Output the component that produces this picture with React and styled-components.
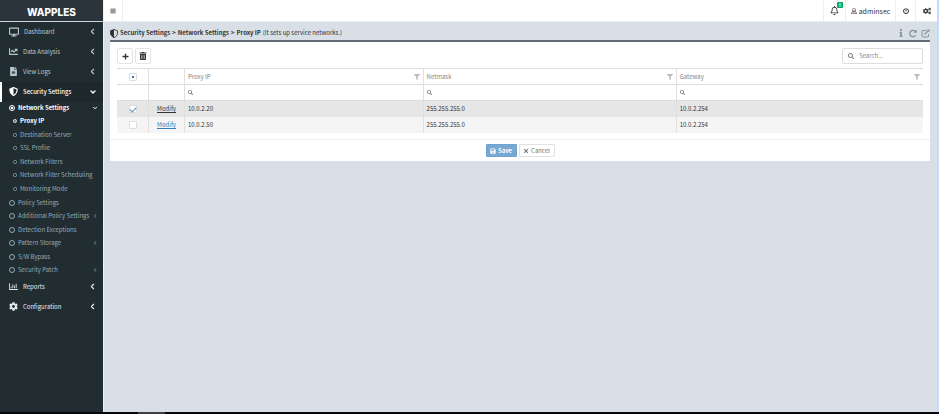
import React from "react";
import styled, { createGlobalStyle, css } from "styled-components";
import {
  FaBars, FaChartLine, FaCog, FaCogs, FaDesktop, FaFileAlt,
  FaFilter, FaInfo, FaPlus, FaPowerOff, FaRegBell, FaRegChartBar,
  FaRegUser, FaSave, FaSearch, FaShieldAlt, FaTimes, FaTrashAlt,
} from "react-icons/fa";
import { FiChevronDown, FiChevronLeft } from "react-icons/fi";

const GlobalStyle = createGlobalStyle`
  * { box-sizing: border-box; }
  body {
    margin: 0;
    background: #d9dfe7;
    color: #333;
    font: 6px/10px "Noto Sans CJK KR", "Noto Sans", sans-serif;
  }
  button, input { font: inherit; color: inherit; }
  ul { margin: 0; padding: 0; list-style: none; }
  a { color: inherit; text-decoration: none; }
  svg { flex: none; display: block; }
`;

const Page = styled.div`
  display: grid;
  grid-template-columns: 104px 1fr 2px;
  grid-template-rows: 1fr 2px;
  min-height: 100vh;
`;
const Sidebar = styled.aside`
  background: #222d32;
  color: #b8c7ce;
  border-right: 1px solid #eef1f4;
`;
const Brand = styled.a`
  display: flex;
  align-items: center;
  justify-content: center;
  height: 22px;
  padding-top: 3px;
  background: #2b343b;
  border-bottom: 1px solid #cfd5d9;
  color: #fff;
  font: 800 10px/12px Inter, sans-serif;
`;
const MainItem = styled.a`
  display: flex;
  align-items: center;
  gap: 5px;
  height: 20px;
  padding: 0 6px 1px ${(p) => (p.$active ? 7 : 9)}px;
  color: ${(p) => (p.$bright ? "#e4eaed" : "#b8c7ce")};
  ${(p) => p.$active && css`
    background: #1e282c;
    border-left: 2px solid #fff;
    color: #fff;
    font-weight: 500;
  `}
`;
const Label = styled.span`
  flex: 1;
  white-space: nowrap;
`;
const SubMenu = styled.ul`
  display: grid;
  grid-template-rows: repeat(13, 1fr);
  height: 176px;
  margin-top: -1px;
  color: #93acb7;
`;
const SubGroup = styled.li`
  display: grid;
  grid-row: span ${(p) => p.$rows};
  grid-template-rows: repeat(${(p) => p.$rows}, 1fr);
`;
const Nested = styled.ul`
  display: grid;
  grid-row: span 6;
  grid-template-rows: repeat(6, 1fr);
`;
const SubLink = styled.a`
  display: flex;
  align-items: center;
  gap: 3px;
  height: 100%;
  padding: 0 5px 0 ${(p) => (p.$deep ? 13 : 9)}px;
  ${(p) => p.$active && css`
    color: #fff;
    font-weight: 700;
  `}
`;
const Main = styled.main`
  display: flex;
  flex-direction: column;
`;
const TopBar = styled.header`
  display: flex;
  height: 22px;
  background: #fff;
  border-bottom: 1px solid #e8ebef;
`;
const TopButton = styled.button`
  display: flex;
  align-items: center;
  justify-content: center;
  gap: 2px;
  width: ${(p) => p.$width}px;
  padding: 0;
  background: none;
  border: 0 solid #eeeff1;
  border-${(p) => p.$side || "left"}-width: 1px;
  font-size: 7px;
`;
const Spacer = styled.div`
  flex: 1;
`;
const BellWrap = styled.span`
  position: relative;
`;
const Badge = styled.span`
  position: absolute;
  top: -4px;
  right: -4px;
  width: 6px;
  height: 6px;
  background: #00a65a;
  border-radius: 1px;
  color: #fff;
  font-size: 5px;
  line-height: 6px;
  text-align: center;
`;
const Content = styled.div`
  padding: 0 7px 0 6px;
`;
const TitleRow = styled.div`
  display: flex;
  align-items: center;
  gap: 2px;
  height: 18px;
  padding-top: 4px;
`;
const Crumbs = styled.nav`
  display: flex;
  align-items: center;
  gap: 2px;
  font-weight: 700;
`;
const Note = styled.span`
  font-weight: 400;
`;
const PageActions = styled.div`
  display: flex;
  align-items: center;
  gap: 4px;
  margin-left: auto;
  color: #8593a3;
`;
const IconButton = styled.button`
  display: flex;
  padding: 0;
  background: none;
  border: 0;
`;
const Panel = styled.section`
  background: #fff;
  border-top: 2px solid #636c76;
  border-radius: 1px;
`;
const Toolbar = styled.div`
  display: flex;
  align-items: center;
  gap: 2px;
  padding: 6px 7px 4px;
`;
const ToolButton = styled.button`
  display: flex;
  align-items: center;
  justify-content: center;
  width: 16px;
  height: 16px;
  padding: 0;
  background: #fff;
  border: 1px solid #e4e4e4;
  border-radius: 2px;
`;
const SearchBox = styled.label`
  display: flex;
  align-items: center;
  gap: 5px;
  width: 81px;
  height: 16px;
  margin-left: auto;
  padding: 0 5px;
  border: 1px solid #ddd;
  border-radius: 2px;
  color: #777;
`;
const TextField = styled.input`
  flex: 1;
  min-width: 0;
  width: 100%;
  height: 10px;
  padding: 0;
  background: none;
  border: 0;
  outline: 0;
  &::placeholder { color: #888; opacity: 1; }
`;
const TableWrap = styled.div`
  padding: 0 7px 6px;
  border-bottom: 1px solid #eee;
`;
const Table = styled.table`
  width: 100%;
  table-layout: fixed;
  border-collapse: separate;
  border-spacing: 0;
`;
const Col = styled.col`
  width: ${(p) => p.$width};
`;
const Cell = styled.td`
  height: 16px;
  padding: 0 3px;
  border-left: ${(p) => (p.$first ? 0 : 1)}px solid #e0e0e0;
  text-align: ${(p) => (p.$center ? "center" : "left")};
`;
const HeadCell = styled(Cell).attrs({ as: "th" })`
  border-top: 1px solid #ddd;
  color: #858585;
  font-weight: 400;
`;
const FilterCell = styled(Cell)`
  height: 17px;
  border-top: 1px solid #ddd;
  border-bottom: 1px solid #ddd;
  color: #777;
`;
const HeadInner = styled.div`
  display: flex;
  align-items: center;
  justify-content: space-between;
`;
const FilterLabel = styled.label`
  display: flex;
  align-items: center;
  gap: 3px;
`;
const Row = styled.tr`
  background: ${(p) => (p.$selected ? "#e6e6e6" : "#f5f5f5")};
`;
const Check = styled.input.attrs({ type: "checkbox" })`
  appearance: none;
  display: grid;
  place-items: center;
  width: 8px;
  height: 8px;
  margin: 0 auto;
  background: #fff;
  border: 1px solid #ddd;
  border-radius: 1px;
  ${(p) => p.$partial && css`
    &::before {
      content: "";
      width: 2px;
      height: 2px;
      background: #337ab7;
    }
  `}
  &:checked::before {
    content: "";
    width: 5px;
    height: 3px;
    border: solid #5a94c8;
    border-width: 0 0 1px 1px;
    transform: rotate(-45deg);
  }
`;
const Modify = styled.a`
  color: ${(p) => (p.$selected ? "#333" : "#337ab7")};
  text-decoration: underline;
`;
const Footer = styled.div`
  display: flex;
  justify-content: center;
  gap: 2px;
  padding: 4px 0;
`;
const FormButton = styled.button`
  display: flex;
  align-items: center;
  justify-content: center;
  gap: 2px;
  width: ${(p) => (p.$primary ? 31 : 36)}px;
  height: 13px;
  padding: 0;
  border: 1px solid ${(p) => (p.$primary ? "#6fa3cf" : "#e2e2e2")};
  border-radius: 1px;
  background: ${(p) => (p.$primary ? "#76a8d2" : "#fff")};
  color: ${(p) => (p.$primary ? "#fff" : "#777")};
  font-weight: ${(p) => (p.$primary ? 700 : 400)};
`;
const Edge = styled.div`
  background: #c5dcf8;
`;
const BottomStrip = styled.div`
  grid-column: 1 / -1;
  padding-left: 138px;
  background: #05070d;
`;
const StripThumb = styled.div`
  width: 27px;
  height: 2px;
  background: #3c3f43;
`;

const topItems = [
  [FaDesktop, "Dashboard", 10],
  [FaChartLine, "Data Analysis", 9],
  [FaFileAlt, "View Logs", 9],
];
const nestedItems = ["Proxy IP", "Destination Server", "SSL Profile", "Network Filters", "Network Filter Scheduling", "Monitoring Mode"];
const subItems = [
  ["Policy Settings"], ["Additional Policy Settings", true], ["Detection Exceptions"],
  ["Pattern Storage", true], ["S/W Bypass"], ["Security Patch", true],
];
const columns = ["Proxy IP", "Netmask", "Gateway"];
const rows = [
  { ip: "10.0.2.20", mask: "255.255.255.0", gateway: "10.0.2.254", selected: true },
  { ip: "10.0.2.50", mask: "255.255.255.0", gateway: "10.0.2.254", selected: false },
];

function NavItem({ icon: Icon, label, size = 9, active, bright }) {
  return (
    <MainItem href="#" $active={active} $bright={bright}>
      <Icon size={size} />
      <Label>{label}</Label>
      {active ? <FiChevronDown size={8} strokeWidth={4} /> : <FiChevronLeft size={9} strokeWidth={3} />}
    </MainItem>
  );
}

function Ring({ size, dot }) {
  return (
    <svg width={size} height={size} viewBox="0 0 12 12" aria-hidden="true">
      <circle cx="6" cy="6" r="5" fill="none" stroke="currentColor" strokeWidth="2" />
      {dot && <circle cx="6" cy="6" r="2.500" fill="currentColor" />}
    </svg>
  );
}

function HalfShield() {
  return (
    <svg width="8" height="9" viewBox="0 0 16 18" aria-hidden="true">
      <path d="M8 1 15 3.5V8c0 4.500-3 7.500-7 9.200C4 15.500 1 12.500 1 8V3.500Z" fill="none" stroke="#333" strokeWidth="1.800" />
      <path d="M8 1 1 3.500V8c0 4.500 3 7.500 7 9.200Z" fill="#333" />
    </svg>
  );
}

function RepeatIcon() {
  return (
    <svg width="8" height="9" viewBox="0 0 1536 1792" fill="currentColor" aria-hidden="true">
      <path d="M1536 256v448q0 26-19 45t-45 19h-448q-42 0-59-40-17-39 14-69l138-138Q969 384 768 384q-104 0-198.500 40.500T406 534 296.500 697.500 256 896t40.500 198.500T406 1258t163.500 109.500T768 1408q119 0 225-52t179-147q7-10 23-12 15 0 25 9l137 138q9 8 9.500 20.500t-7.500 22.500q-109 132-264 204.500T768 1664q-156 0-298-61t-245-164-164-245T0 896t61-298 164-245T470 189t298-61q147 0 284.500 55.500T1297 340l130-129q29-31 70-14 39 17 39 59z" />
    </svg>
  );
}

function OpenWindowIcon() {
  return (
    <svg width="9" height="9" viewBox="0 0 18 18" fill="none" stroke="currentColor" aria-hidden="true">
      <path d="M10 3H4Q2 3 2 5v9q0 2 2 2h9q2 0 2-2v-4" strokeWidth="2" />
      <path d="M7 11 14 4" strokeWidth="2.600" />
      <path d="M11 1h6v6Z" fill="currentColor" stroke="none" />
    </svg>
  );
}

export default function App() {
  return (
    <>
      <GlobalStyle />
      <Page>
        <Sidebar>
          <Brand href="#">WAPPLES</Brand>
          {topItems.map(([icon, label, size]) => (
            <NavItem key={label} icon={icon} label={label} size={size} />
          ))}
          <NavItem icon={FaShieldAlt} label="Security Settings" active />
          <SubMenu>
            <SubGroup $rows={7}>
              <SubLink href="#" $active>
                <Ring size={6} dot />
                <Label>Network Settings</Label>
                <FiChevronDown size={6} strokeWidth={4} />
              </SubLink>
              <Nested>
                {nestedItems.map((label, i) => (
                  <li key={label}>
                    <SubLink href="#" $deep $active={i === 0}>
                      <Ring size={4} dot={i === 0} />
                      <Label>{label}</Label>
                    </SubLink>
                  </li>
                ))}
              </Nested>
            </SubGroup>
            {subItems.map(([label, more]) => (
              <li key={label}>
                <SubLink href="#">
                  <Ring size={6} />
                  <Label>{label}</Label>
                  {more && <FiChevronLeft size={6} strokeWidth={3} />}
                </SubLink>
              </li>
            ))}
          </SubMenu>
          <NavItem icon={FaRegChartBar} label="Reports" bright />
          <NavItem icon={FaCog} label="Configuration" bright />
        </Sidebar>
        <Main>
          <TopBar>
            <TopButton $width={19} $side="right" aria-label="Toggle menu"><FaBars size={6} /></TopButton>
            <Spacer />
            <TopButton $width={22} aria-label="Notifications">
              <BellWrap><FaRegBell size={9} /><Badge>0</Badge></BellWrap>
            </TopButton>
            <TopButton $width={50}><FaRegUser size={6} />adminsec</TopButton>
            <TopButton $width={20} aria-label="Log out"><FaPowerOff size={6} /></TopButton>
            <TopButton $width={22} aria-label="Options"><FaCogs size={8} /></TopButton>
          </TopBar>
          <Content>
            <TitleRow>
              <HalfShield />
              <Crumbs>
                <span>Security Settings</span>
                <span>&gt;</span>
                <span>Network Settings</span>
                <span>&gt;</span>
                <span>Proxy IP</span>
                <Note>(It sets up service networks.)</Note>
              </Crumbs>
              <PageActions>
                <IconButton aria-label="Information"><FaInfo size={8} /></IconButton>
                <IconButton aria-label="Refresh"><RepeatIcon /></IconButton>
                <IconButton aria-label="Open in new window"><OpenWindowIcon /></IconButton>
              </PageActions>
            </TitleRow>
            <Panel>
              <Toolbar>
                <ToolButton aria-label="Add"><FaPlus size={7} /></ToolButton>
                <ToolButton aria-label="Delete"><FaTrashAlt size={8} /></ToolButton>
                <SearchBox>
                  <FaSearch size={6} />
                  <TextField aria-label="Search" placeholder="Search..." />
                </SearchBox>
              </Toolbar>
              <TableWrap>
                <Table>
                  <colgroup>
                    <Col $width="31px" />
                    <Col $width="36px" />
                    <Col $width="29.6%" />
                    <Col $width="31.4%" />
                    <Col />
                  </colgroup>
                  <thead>
                    <tr>
                      <HeadCell $first><Check $partial aria-label="Select all rows" /></HeadCell>
                      <HeadCell />
                      {columns.map((name) => (
                        <HeadCell key={name}>
                          <HeadInner>{name}<FaFilter size={6} color="#bbb" /></HeadInner>
                        </HeadCell>
                      ))}
                    </tr>
                    <tr>
                      <FilterCell $first />
                      <FilterCell />
                      {columns.map((name) => (
                        <FilterCell key={name}>
                          <FilterLabel>
                            <FaSearch size={5} />
                            <TextField aria-label={`Filter ${name}`} />
                          </FilterLabel>
                        </FilterCell>
                      ))}
                    </tr>
                  </thead>
                  <tbody>
                    {rows.map((row) => (
                      <Row key={row.ip} $selected={row.selected}>
                        <Cell $first><Check defaultChecked={row.selected} aria-label={`Select ${row.ip}`} /></Cell>
                        <Cell $center><Modify href="#" $selected={row.selected}>Modify</Modify></Cell>
                        <Cell>{row.ip}</Cell>
                        <Cell>{row.mask}</Cell>
                        <Cell>{row.gateway}</Cell>
                      </Row>
                    ))}
                  </tbody>
                </Table>
              </TableWrap>
              <Footer>
                <FormButton $primary><FaSave size={6} />Save</FormButton>
                <FormButton><FaTimes size={6} />Cancel</FormButton>
              </Footer>
            </Panel>
          </Content>
        </Main>
        <Edge />
        <BottomStrip><StripThumb /></BottomStrip>
      </Page>
    </>
  );
}
